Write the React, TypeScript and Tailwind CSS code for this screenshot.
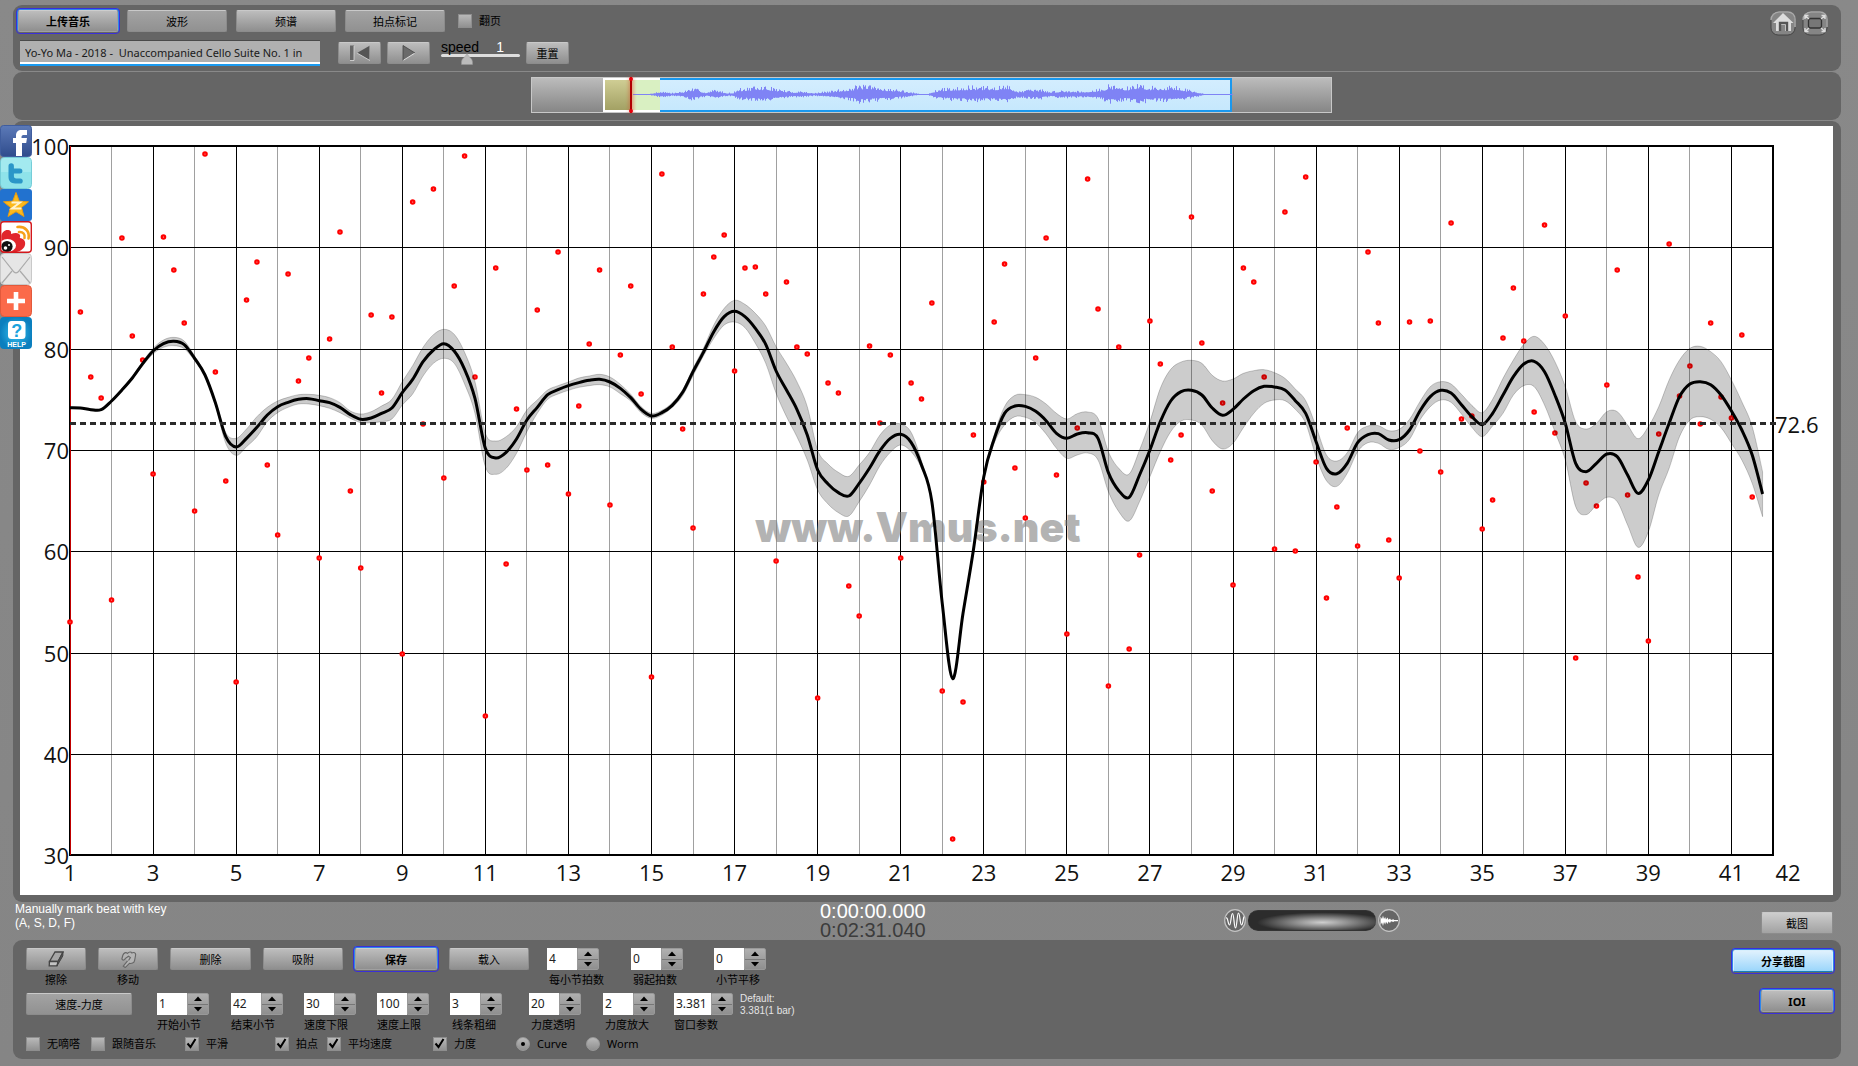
import React from "react";

const UI_FONT = "font-['Noto_Sans','Noto_Sans_CJK_SC',sans-serif]";
const ARIAL = "font-['Liberation_Sans',Arial,sans-serif]";

/* ---------- chart data: one entry per beat, four beats per bar ---------- */

const X0 = 70;
const BEAT = 10.384;
const beatX = (i: number) => X0 + i * BEAT;

const DOTS = [
  622, 312, 377, 398, 600, 238, 336, 360, 474, 237, 270, 323, 511, 154, 372, 481, 682, 300, 262, 465, 535, 274, 381,
  358, 558, 339, 232, 491, 568, 315, 393, 317, 654, 202, 424, 189, 478, 286, 156, 377, 716, 268, 564, 409, 470, 310,
  465, 252, 494, 406, 344, 270, 505, 355, 286, 394, 677, 174, 347, 429, 528, 294, 257, 235, 371, 268, 267, 294, 561,
  282, 347, 354, 698, 383, 393, 586, 616, 346, 423, 355, 558, 383, 399, 303, 691, 839, 702, 435, 482, 322, 264, 468,
  518, 358, 238, 475, 634, 428, 179, 309, 686, 347, 649, 555, 321, 364, 460, 435, 217, 343, 491, 403, 585, 268, 282,
  377, 549, 212, 551, 177, 462, 598, 507, 428, 546, 252, 323, 540, 578, 322, 451, 321, 472, 223, 419, 416, 529, 500,
  338, 288, 341, 412, 225, 433, 316, 658, 483, 506, 385, 270, 495, 577, 641, 434, 244, 396, 366, 424, 323, 397, 418,
  335, 497,
];

/* [tempo curve, upper edge of the band, lower edge of the band] in thirds of a unit */
const CURVE: [number, number, number][] = [
  [1223, 1221, 1225], [1224, 1222, 1226], [1229, 1226, 1231], [1229, 1226, 1231], [1203, 1200, 1206],
  [1170, 1166, 1173], [1134, 1130, 1138], [1091, 1085, 1097], [1053, 1045, 1062], [1031, 1020, 1042],
  [1024, 1012, 1037], [1034, 1023, 1046], [1075, 1068, 1082], [1125, 1120, 1130], [1208, 1203, 1213],
  [1310, 1298, 1330], [1341, 1315, 1366], [1315, 1287, 1340], [1282, 1250, 1310], [1245, 1222, 1265],
  [1220, 1203, 1238], [1207, 1192, 1222], [1198, 1184, 1212], [1196, 1183, 1212], [1202, 1186, 1217],
  [1208, 1193, 1225], [1222, 1208, 1238], [1244, 1233, 1255], [1258, 1242, 1268], [1254, 1235, 1268],
  [1240, 1218, 1265], [1224, 1198, 1257], [1178, 1145, 1215], [1138, 1097, 1182], [1085, 1042, 1128],
  [1050, 1004, 1090], [1031, 988, 1075], [1053, 1003, 1090], [1108, 1057, 1152], [1195, 1145, 1240],
  [1345, 1300, 1400], [1374, 1323, 1423], [1357, 1310, 1405], [1317, 1280, 1360], [1260, 1230, 1295],
  [1222, 1200, 1240], [1184, 1170, 1198], [1169, 1157, 1182], [1157, 1146, 1171], [1148, 1134, 1162],
  [1141, 1128, 1157], [1138, 1123, 1154], [1146, 1131, 1161], [1165, 1153, 1181], [1193, 1183, 1203],
  [1228, 1220, 1238], [1248, 1240, 1255], [1238, 1231, 1245], [1216, 1208, 1222], [1177, 1169, 1187],
  [1115, 1105, 1127], [1057, 1045, 1068], [995, 975, 1015], [950, 925, 975], [934, 901, 966],
  [950, 913, 983], [985, 940, 1030], [1033, 978, 1090], [1113, 1040, 1180], [1170, 1090, 1250],
  [1228, 1145, 1310], [1305, 1220, 1380], [1410, 1350, 1470], [1452, 1392, 1512], [1478, 1417, 1538],
  [1488, 1429, 1548], [1450, 1395, 1505], [1404, 1357, 1455], [1352, 1305, 1397], [1315, 1275, 1357],
  [1303, 1272, 1335], [1327, 1297, 1355], [1395, 1383, 1405], [1505, 1503, 1507], [1810, 1808, 1812],
  [2036, 2034, 2038], [1840, 1838, 1842], [1650, 1648, 1652], [1430, 1426, 1434], [1317, 1305, 1330],
  [1240, 1220, 1275], [1218, 1186, 1250], [1219, 1184, 1252], [1234, 1192, 1268], [1262, 1212, 1302],
  [1300, 1240, 1345], [1315, 1257, 1375], [1302, 1241, 1365], [1298, 1236, 1359], [1315, 1255, 1380],
  [1418, 1355, 1475], [1472, 1405, 1535], [1492, 1422, 1563], [1425, 1350, 1505], [1350, 1265, 1430],
  [1265, 1165, 1355], [1203, 1108, 1295], [1175, 1086, 1263], [1171, 1081, 1260], [1185, 1090, 1275],
  [1224, 1126, 1322], [1246, 1143, 1347], [1228, 1137, 1330], [1197, 1120, 1283], [1172, 1112, 1240],
  [1159, 1109, 1210], [1161, 1118, 1200], [1170, 1135, 1202], [1202, 1167, 1228], [1240, 1202, 1270],
  [1325, 1280, 1370], [1405, 1365, 1442], [1421, 1383, 1459], [1390, 1358, 1420], [1328, 1298, 1355],
  [1304, 1278, 1328], [1301, 1277, 1330], [1320, 1292, 1348], [1319, 1288, 1343], [1290, 1258, 1318],
  [1233, 1205, 1260], [1190, 1160, 1220], [1171, 1145, 1200], [1179, 1152, 1207], [1214, 1183, 1242],
  [1250, 1216, 1282], [1274, 1238, 1310], [1240, 1198, 1278], [1185, 1135, 1240], [1130, 1080, 1185],
  [1092, 1033, 1157], [1084, 1009, 1160], [1115, 1033, 1215], [1185, 1085, 1295], [1270, 1160, 1380],
  [1390, 1265, 1520], [1415, 1287, 1544], [1390, 1270, 1515], [1362, 1235, 1492], [1370, 1235, 1505],
  [1425, 1275, 1575], [1480, 1316, 1642], [1440, 1280, 1595], [1355, 1220, 1485], [1270, 1140, 1405],
  [1190, 1080, 1310], [1152, 1045, 1260], [1145, 1039, 1250], [1154, 1055, 1258], [1185, 1085, 1283],
  [1233, 1140, 1330], [1290, 1205, 1380], [1365, 1280, 1450], [1482, 1415, 1550],
];

type Pt = [number, number];

function spline(p: Pt[]): string {
  let d = "";
  for (let i = 0; i < p.length - 1; i++) {
    const a = p[Math.max(0, i - 1)];
    const b = p[i];
    const c = p[i + 1];
    const e = p[Math.min(p.length - 1, i + 2)];
    d += `C${b[0] + (c[0] - a[0]) / 6},${b[1] + (c[1] - a[1]) / 6} ${c[0] - (e[0] - b[0]) / 6},${
      c[1] - (e[1] - b[1]) / 6
    } ${c[0]},${c[1]}`;
  }
  return d;
}

const line = (k: number): Pt[] => CURVE.map((c, i) => [beatX(i), c[k] / 3]);
const mid = line(0);
const upper = line(1);
const lower = line(2).reverse();
const MID_PATH = `M${mid[0]}${spline(mid)}`;
const BAND_PATH = `M${upper[0]}${spline(upper)}L${lower[0]}${spline(lower)}Z`;

function Chart() {
  const bars = Array.from({ length: 40 }, (_, i) => i + 2);
  const odd = Array.from({ length: 21 }, (_, i) => i * 2 + 1);
  const tempos = [100, 90, 80, 70, 60, 50, 40, 30];
  const ty = (t: number) => 146 + (100 - t) * 10.13;
  return (
    <svg
      viewBox="20 126 1813 769"
      className="block h-auto w-full bg-white font-['Open_Sans','Noto_Sans',sans-serif]"
      role="img"
      aria-label="Tempo chart"
    >
      {bars.map((b) => {
        const x = Math.floor(beatX((b - 1) * 4)) + 0.5;
        return (
          <line key={b} x1={x} x2={x} y1={146} y2={854} stroke={b % 2 ? "#000" : "#a0a0a0"} strokeWidth={1} />
        );
      })}
      {tempos.slice(1, -1).map((t) => {
        const y = Math.round(ty(t)) + 0.5;
        return <line key={t} x1={70} x2={1773} y1={y} y2={y} stroke="#000" />;
      })}
      <rect x={70} y={146} width={1703} height={709} fill="none" stroke="#000" strokeWidth={2} />
      <line x1={70.5} x2={70.5} y1={146} y2={855} stroke="#c00000" strokeWidth={1} />
      {DOTS.map((y, i) => (
        <g key={i}>
          <circle cx={beatX(i)} cy={y} r={2.8} fill="#f00" />
          <circle cx={beatX(i)} cy={y} r={0.6} fill="#fbb" />
        </g>
      ))}
      <text
        x={918}
        y={542}
        textAnchor="middle"
        fontSize={41}
        className="font-['Inter',sans-serif] font-black"
        fill="#808080"
        fillOpacity={0.6}
      >
        www.Vmus.net
      </text>
      <path d={BAND_PATH} fill="#000" fillOpacity={0.2} stroke="#000" strokeOpacity={0.2} />
      <path d={MID_PATH} fill="none" stroke="#000" strokeWidth={3} strokeLinejoin="round" />
      <line x1={70} x2={1777} y1={423.5} y2={423.5} stroke="#2a2a2a" strokeWidth={3} strokeDasharray="6 4" />
      <g fontSize={22} fill="#111">
        {tempos.map((t) => (
          <text key={t} x={69} y={ty(t) + 9} textAnchor="end">
            {t}
          </text>
        ))}
        {odd.map((b) => (
          <text key={b} x={beatX((b - 1) * 4)} y={881} textAnchor="middle">
            {b}
          </text>
        ))}
        <text x={1788} y={881} textAnchor="middle">
          42
        </text>
        <text x={1775} y={433}>
          72.6
        </text>
      </g>
    </svg>
  );
}

/* ---------- overview strip ---------- */

const ENVELOPE: Pt[] = [
  [0, 0.3], [16, 0.6], [22, 2], [29, 3.3], [38, 1.5], [50, 3], [57, 6], [64, 5], [73, 2], [82, 5], [93, 1.6],
  [100, 2], [104, 5.5], [115, 6.5], [131, 8], [142, 6], [159, 2.6], [167, 3.4], [181, 1.5], [197, 3.4], [219, 7],
  [227, 9.5], [246, 7], [263, 5], [279, 2], [287, 0.4], [294, 0.4], [299, 3], [307, 5.4], [323, 7.4], [340, 8],
  [356, 7.4], [376, 8.5], [384, 3.4], [406, 5.4], [417, 2.8], [428, 4], [450, 3.4], [468, 5.4], [476, 9.5],
  [493, 6.8], [507, 10.8], [515, 7.5], [543, 8], [559, 3.6], [570, 1.2], [573, 0.4], [600, 0.4],
];

/* small deterministic generator, so the strip looks the same on every load */
function noise(seed: number) {
  let s = seed;
  return () => {
    s = (s * 1664525 + 1013904223) % 4294967296;
    return s / 4294967296;
  };
}

function wavePath(): string {
  const rand = noise(7);
  let d = "";
  let k = 0;
  for (let x = 0; x < 600; x++) {
    while (ENVELOPE[k + 1][0] < x) k++;
    const [xa, a] = ENVELOPE[k];
    const [xb, b] = ENVELOPE[k + 1];
    const env = a + ((b - a) * (x - xa)) / (xb - xa);
    const r1 = rand();
    const r2 = rand();
    const up = Math.max(0.5, env * (0.55 + 0.6 * r1 * r1));
    const dn = Math.max(0.5, env * (0.5 + 0.5 * r2 * r2));
    d += `M${x + 0.5} ${14.5 - up}V${14.5 + dn}`;
  }
  return d;
}
const WAVE = wavePath();

function Overview() {
  return (
    <div className="mx-auto flex h-9 w-[801px] border border-[#c8c8c8] bg-linear-to-b from-[#bcbcbc] to-[#868686] pl-[71px]">
      <div className="relative flex h-[34px] w-[629px] border-2 border-[#1a98ee] bg-linear-to-b from-[#d3edfe] to-[#c6e8fd]">
        <div className="absolute -top-0.5 -left-0.5 flex h-[34px] w-[57px] border-2 border-r-0 border-white">
          <div className="w-[26px] bg-linear-to-b from-[#cfcd94] to-[#a3a164]" />
          <div className="flex-1 bg-linear-to-r from-[#e9d5b0] to-[#d9f0c2] to-20%" />
        </div>
        <svg viewBox="0 0 600 31" className="absolute top-0 left-7 h-[31px] w-[600px]" aria-hidden="true">
          <path d={WAVE} stroke="#7f83f5" strokeWidth={1} fill="none" />
        </svg>
        <div className="absolute -top-[3px] left-[25px] h-9 w-0.5 bg-[#b00000] shadow-[0_0_4px_#d05030]" />
        <div className="absolute -top-[3px] left-6 h-1 w-1 rounded-full bg-red-600" />
        <div className="absolute -bottom-[3px] left-6 h-1 w-1 rounded-full bg-red-600" />
      </div>
    </div>
  );
}

/* ---------- controls ---------- */

const BTN =
  "flex h-[22px] items-center justify-center rounded-xs border text-[11px] leading-none text-black";
const EDGE = "border-[#8c8c8c] border-t-[#c9c9c9]";
const LIGHT = "bg-linear-to-b from-[#bdbdbd] to-[#8f8f8f]";
const FLAT = "bg-linear-to-b from-[#a3a3a3] to-[#919191]";
const FOCUS =
  "outline-1 outline-offset-1 outline-[#3a2fd8] border-[#a0a0a0] border-t-[#cdcdcd] font-bold shadow-[0_-1px_0_1px_#2d86ec]";

function Btn({ className = EDGE, children, label }: { className?: string; children: React.ReactNode; label?: string }) {
  return (
    <button type="button" aria-label={label} className={`${BTN} ${className}`}>
      {children}
    </button>
  );
}

function Check({ label, checked, className = "" }: { label: string; checked?: boolean; className?: string }) {
  return (
    <label className={`flex items-center gap-[7px] ${className}`}>
      <span className="relative flex">
        <input
          type="checkbox"
          defaultChecked={checked}
          className="peer h-3.5 w-3.5 appearance-none border border-[#8e8e8e] bg-linear-to-b from-[#b9b9b9] to-[#919191]"
        />
        <svg
          viewBox="0 0 14 14"
          className="pointer-events-none absolute inset-0 hidden h-3.5 w-3.5 peer-checked:block"
          aria-hidden="true"
        >
          <path d="M2.5 6.5 5.5 10 10.5 2" fill="none" stroke="#000" strokeWidth={2} />
        </svg>
      </span>
      <span>{label}</span>
    </label>
  );
}

function Radio({ label, checked, className = "" }: { label: string; checked?: boolean; className?: string }) {
  return (
    <label className={`flex items-center gap-[7px] ${className}`}>
      <span className="relative flex">
        <input
          type="radio"
          name="view"
          defaultChecked={checked}
          className="peer h-3.5 w-3.5 appearance-none rounded-full border border-[#999] bg-linear-to-b from-[#b9b9b9] to-[#8f8f8f]"
        />
        <span className="pointer-events-none absolute top-[5px] left-[5px] hidden h-1 w-1 rounded-full bg-black peer-checked:block" />
      </span>
      <span>{label}</span>
    </label>
  );
}

function Spinner({
  label,
  value,
  className = "w-[73px]",
  inputClass = "w-[30px]",
  labelClass = "",
}: {
  label: string;
  value: string;
  className?: string;
  inputClass?: string;
  labelClass?: string;
}) {
  const id = `f-${label}`;
  return (
    <div className={`flex shrink-0 flex-col gap-px ${className}`}>
      <div className="flex h-[22px]">
        <input
          id={id}
          type="text"
          defaultValue={value}
          className={`h-[22px] bg-white pb-0.5 pl-0.5 text-[12px] leading-none text-[#222] ${inputClass}`}
        />
        <div className="flex w-[22px] flex-col rounded-r-xs border border-[#999] bg-linear-to-b from-[#b0b0b0] to-[#8f8f8f]">
          <button
            type="button"
            aria-label={`${label} +`}
            className="flex flex-1 items-center justify-center border-b border-[#777]"
          >
            <svg viewBox="0 0 8 5" className="h-[5px] w-2">
              <path d="M0 5 4 0.5 8 5Z" />
            </svg>
          </button>
          <button type="button" aria-label={`${label} -`} className="flex flex-1 items-center justify-center">
            <svg viewBox="0 0 8 5" className="h-[5px] w-2">
              <path d="M0 0H8L4 4.5Z" />
            </svg>
          </button>
        </div>
      </div>
      <label htmlFor={id} className={`whitespace-nowrap leading-[18px] ${labelClass}`}>
        {label}
      </label>
    </div>
  );
}

function ToolButton({ label, children }: { label: string; children: React.ReactNode }) {
  return (
    <div className="flex w-[60px] flex-col items-center gap-px">
      <Btn label={label} className={`w-[60px] ${EDGE} ${LIGHT}`}>
        {children}
      </Btn>
      <span className="leading-[18px]">{label}</span>
    </div>
  );
}

/* ---------- share icons ---------- */

function ShareBar() {
  return (
    <nav aria-label="Share" className="absolute top-[125px] left-0 flex w-8 flex-col">
      <a href="#facebook" aria-label="Facebook">
        <svg viewBox="0 0 32 32" className="h-8 w-8">
          <defs>
            <linearGradient id="fb" x1="0" y1="0" x2="0" y2="1">
              <stop offset="0" stopColor="#5c7ab8" />
              <stop offset="1" stopColor="#2f4c8c" />
            </linearGradient>
          </defs>
          <rect x="0.5" y="0.5" width="31" height="31" rx="3" fill="url(#fb)" stroke="#3f5d9e" />
          <path
            d="M16 31V18h-3v-5h3v-2.500c0-3.500 2-5.500 5.500-5.500H27v5h-3c-1.500 0-2.500.5-2.500 2V13H27l-.8 5h-4.200v13Z"
            fill="#fff"
          />
        </svg>
      </a>
      <a href="#twitter" aria-label="Twitter">
        <svg viewBox="0 0 32 32" className="h-8 w-8">
          <rect x="0.5" y="0.5" width="31" height="31" rx="4" fill="#8fe3ea" stroke="#75cdd8" />
          <path d="M1 4a3 3 0 0 1 3-3h24a3 3 0 0 1 3 3v11H1Z" fill="#b0eef2" opacity=".6" />
          <path
            d="M8.500 9a2.700 2.700 0 0 1 5.400 0v2.500h6a2.300 2.300 0 0 1 0 5h-6V19c0 1.800.8 2.400 2.300 2.400h4a2.500 2.500 0 0 1 0 5.100h-5c-4.300 0-6.700-2.300-6.700-6.700Z"
            fill="#2b96c8"
          />
        </svg>
      </a>
      <a href="#qzone" aria-label="Qzone">
        <svg viewBox="0 0 32 32" className="h-8 w-8">
          <rect width="32" height="32" rx="3" fill="#2272cf" />
          <path
            d="M16 3.500 19.300 12.200 28.500 12.800 21.500 18.400 24 27.500 16 22.700 8 27.500 10.500 18.400 3.500 12.800 12.700 12.200Z"
            fill="#fbb91c"
            stroke="#e79b12"
          />
          <path d="M11.500 13.500H20L12 19.500H21.500" fill="none" stroke="#fff3cf" strokeWidth="2" />
        </svg>
      </a>
      <a href="#weibo" aria-label="Weibo">
        <svg viewBox="0 0 32 32" className="h-8 w-8">
          <rect x="0.700" y="0.700" width="30.600" height="30.600" rx="3" fill="#fff" />
          <path
            d="M1.400 15c.5-4 3.500-6.500 7-6 2.500.300 2.900 2 2.700 4 4-1.800 8.500-1.500 9 1.500.2 1.300-.3 2-.3 2.500 3.500.6 6 2.600 5.300 6.500-.7 4-4 6.300-8.500 7.600H1.400Z"
            fill="#e1262c"
          />
          <ellipse cx="7.500" cy="24.500" rx="8.500" ry="6.500" fill="#fff" />
          <circle cx="7" cy="25.500" r="5.600" fill="#111" />
          <circle cx="5.500" cy="27" r="1.800" fill="#fff" />
          <circle cx="9" cy="24" r="1" fill="#fff" />
          <path
            d="M19 11c4-.500 6.500 2.500 5.500 6M17.500 6c7.500-1 12.500 4.500 11 11.500"
            fill="none"
            stroke="#f6a11b"
            strokeWidth="2.600"
            strokeLinecap="round"
          />
          <rect x="0.700" y="0.700" width="30.600" height="30.600" rx="3" fill="none" stroke="#d3181c" strokeWidth="1.400" />
        </svg>
      </a>
      <a href="#mail" aria-label="Mail">
        <svg viewBox="0 0 32 32" className="h-8 w-8">
          <rect x="0.500" y="0.500" width="31" height="31" rx="4" fill="#e6e6e6" stroke="#c9c9c9" />
          <path d="M2 4 14 19a3 3 0 0 0 4 0L30 4M2 30 12 18M30 30 20 18" fill="none" stroke="#aaa" strokeWidth="1.200" />
        </svg>
      </a>
      <a href="#more" aria-label="More">
        <svg viewBox="0 0 32 32" className="h-8 w-8">
          <rect x="0.500" y="0.500" width="31" height="31" rx="4" fill="#fb6a4a" stroke="#e2593b" />
          <path d="M16 7v18M7 16h18" stroke="#fff" strokeWidth="4.600" />
        </svg>
      </a>
      <a href="#help" aria-label="Help">
        <svg viewBox="0 0 32 32" className="h-8 w-8">
          <defs>
            <radialGradient id="hp">
              <stop offset="0" stopColor="#35c3f3" />
              <stop offset="1" stopColor="#0b7fbe" />
            </radialGradient>
          </defs>
          <rect width="32" height="32" rx="4" fill="url(#hp)" />
          <rect x="8" y="4" width="17.500" height="18" rx="3.500" fill="#fff" />
          <text x="16.700" y="19.500" textAnchor="middle" fontSize="18" className={`font-bold ${ARIAL}`} fill="#1aa3dd">
            ?
          </text>
          <text x="16.500" y="29.500" textAnchor="middle" fontSize="7" className={`font-bold ${ARIAL}`} fill="#fff">
            HELP
          </text>
        </svg>
      </a>
    </nav>
  );
}

const PANEL = "rounded-[9px] bg-[#656565]";

export default function App() {
  return (
    <div
      className={`relative flex min-h-screen flex-col bg-linear-to-b from-[#898989] to-[#858585] pt-[5px] pr-[17px] pb-[7px] pl-[13px] text-[11px] text-black ${UI_FONT}`}
    >
      {/* toolbar */}
      <header className={`${PANEL} flex h-[66px] items-start justify-between pr-[13px] pl-[5px]`}>
        <div className="pt-[5px]">
          <div className="flex items-center gap-[9px]">
            <Btn className={`w-[100px] ${LIGHT} ${FOCUS}`}>上传音乐</Btn>
            <Btn className={`w-[100px] ${EDGE} ${FLAT}`}>波形</Btn>
            <Btn className={`w-[100px] ${EDGE} ${LIGHT}`}>频谱</Btn>
            <Btn className={`w-[100px] ${EDGE} ${FLAT}`}>拍点标记</Btn>
            <Check label="翻页" className="ml-1" />
          </div>
          <div className="mt-2 flex items-start">
            <input
              type="text"
              aria-label="Track"
              readOnly
              value="Yo-Yo Ma - 2018 -  Unaccompanied Cello Suite No. 1 in"
              className="ml-0.5 h-[26px] w-[300px] border-t border-b-2 border-t-[#4a4a4a] border-b-[#1c9bf0] bg-[#b0b0b0] pl-[5px] text-[11px] text-[#1a1a1a] shadow-[inset_0_-2px_0_#fff]"
            />
            <div className="mt-0.5 ml-[18px] flex gap-1.5">
              <Btn label="Rewind" className={`w-[43px] ${EDGE} ${LIGHT}`}>
                <svg viewBox="0 0 20 16" className="h-4 w-5">
                  <path d="M0 0.500H4V15.500H0Z" fill="#666" />
                  <path d="M20 0.500V15.500L7 8Z" fill="#555" />
                  <path d="M4 1V15.500H0M20 0.500V15.500L7 8" fill="none" stroke="#ddd" strokeWidth="0.800" />
                </svg>
              </Btn>
              <Btn label="Play" className={`w-[43px] ${EDGE} ${LIGHT}`}>
                <svg viewBox="0 0 14 16" className="h-4 w-3.5">
                  <path d="M1 0.500V15.500L13 8Z" fill="#6a6a6a" />
                  <path d="M13 8 1 15.500" stroke="#ddd" />
                  <path d="M1 15.500V0.500L13 8" fill="none" stroke="#444" strokeWidth="0.800" />
                </svg>
              </Btn>
            </div>
            <div className={`relative ml-[11px] w-[79px] text-[14px] leading-none ${ARIAL}`}>
              <div className="flex justify-between pr-4">
                <label htmlFor="speed">speed</label>
                <output className="text-white">1</output>
              </div>
              <input
                id="speed"
                type="range"
                min={0}
                max={3}
                step={0.01}
                defaultValue={1}
                className="absolute top-2 left-0 h-4 w-full opacity-0"
              />
              <div className="pointer-events-none h-[3px] w-full rounded-full bg-[#dedede]" />
              <svg viewBox="0 0 12 12" className="pointer-events-none -mt-1 ml-5 h-3 w-3" aria-hidden="true">
                <path
                  d="M6 0.500C7 4 11.500 5 11.500 9V11.500H0.500V9C0.500 5 5 4 6 0.500Z"
                  fill="#bbb"
                  stroke="#999"
                  strokeWidth="0.500"
                />
              </svg>
            </div>
            <Btn className={`mt-0.5 ml-1.5 w-[43px] ${EDGE} ${LIGHT}`}>重置</Btn>
          </div>
        </div>
        <div className="flex gap-1.5 pt-1.5">
          <button type="button" aria-label="Home">
            <svg viewBox="0 0 26 25" className="h-[25px] w-[26px]">
              <rect x="1" y="1" width="24" height="23" rx="7" fill="#858585" stroke="#444" />
              <path d="M1 9a8 8 0 0 1 8-8h9a7 7 0 0 1 7 7v8" fill="none" stroke="#aaa" strokeWidth="1.500" />
              <path d="M13 2 3 12h3v8h5v-6h4v6h6v-8h2.500Z" fill="#dcdcdc" />
              <path d="M10 20v-8h7v8" fill="none" stroke="#555" strokeWidth="2.400" />
            </svg>
          </button>
          <button type="button" aria-label="Full screen">
            <svg viewBox="0 0 26 25" className="h-[25px] w-[26px]">
              <rect x="1" y="1" width="24" height="23" rx="7" fill="#858585" stroke="#444" />
              <path d="M1 9a8 8 0 0 1 8-8h9a7 7 0 0 1 7 7v8" fill="none" stroke="#aaa" strokeWidth="1.500" />
              <rect x="6.500" y="7.500" width="13" height="9.500" rx="2" fill="#777" stroke="#333" strokeWidth="1.300" />
              <path
                d="M3 8V4.500H6.500M3 4.500 7 8M19.500 4.500H23V8M23 4.500 19 8M3 17V20.500H6.500M3 20.500 7 17M23 17V20.500H19.500M23 20.500 19 17"
                fill="none"
                stroke="#ddd"
                strokeWidth="1.400"
              />
            </svg>
          </button>
        </div>
      </header>

      {/* overview */}
      <section className={`${PANEL} mt-px h-12 pt-[5px] pl-[9px]`}>
        <Overview />
      </section>

      {/* chart */}
      <main className={`${PANEL} mt-px pt-[5px] pr-2 pb-[7px] pl-[7px]`}>
        <Chart />
      </main>

      {/* status strip */}
      <section className={`grid h-[38px] grid-cols-[807fr_404fr_617fr] ${ARIAL}`}>
        <p className="w-[170px] pl-0.5 text-[12px] leading-[14px] text-white">
          Manually mark beat with key
          <br />
          (A, S, D, F)
        </p>
        <div className="text-[20px] leading-[19px]">
          <div className="text-white">0:00:00.000</div>
          <div className="text-[#3c3c3c]">0:02:31.040</div>
        </div>
        <div className="flex justify-between pr-2">
          <div className="flex items-center gap-0.5 pb-px">
            <svg viewBox="0 0 22 23" className="h-[23px] w-[22px]" aria-hidden="true">
              <ellipse cx="11" cy="11.500" rx="10.300" ry="10.800" fill="#666" stroke="#c4c4c4" strokeWidth="1.200" />
              <path
                d="M2 9c2-1 2 7 3.500 7S7 4.500 8.500 4.500 10 19 11.500 19 13 4 14.500 4 16 16 17.500 16 19 10 20 7.500"
                fill="none"
                stroke="#fff"
                strokeWidth="1.200"
              />
            </svg>
            <div className="h-[21px] w-[128px] rounded-[10px] border-y border-[#333] bg-[radial-gradient(ellipse_at_58%_60%,#cfcfcf_0%,#8f8f8f_25%,#2c2c2c_62%)]" />
            <svg viewBox="0 0 22 23" className="h-[23px] w-[22px]" aria-hidden="true">
              <ellipse cx="11" cy="11.500" rx="10.300" ry="10.800" fill="#666" stroke="#c4c4c4" strokeWidth="1.200" />
              <path
                d="M2.500 7.500 4 10 5 6.500 6 10 7.200 8 8 10.500 9.500 8.500 10.500 10.800 12 9.500 13 11 15.500 10.300 16 11 20 11V12.200L16 12.300 15.500 13 13 12.300 12 14 10.500 12.500 9.500 15 8 12.800 7.200 15.500 6 13 5 17 4 13.500 2.500 16Z"
                fill="#fff"
              />
            </svg>
          </div>
          <Btn
            className={`mt-2.5 w-[72px] ${EDGE} bg-linear-to-b from-[#cdcdcd] to-[#a2a2a2] font-['Noto_Sans','Noto_Sans_CJK_SC',sans-serif]`}
          >
            截图
          </Btn>
        </div>
      </section>

      {/* settings */}
      <footer className={`${PANEL} flex h-[119px] items-start justify-between pt-2 pr-2 pl-[13px]`}>
        <div className="flex flex-col">
          <div className="flex items-start gap-3">
            <ToolButton label="擦除">
              <svg viewBox="0 0 18 16" className="h-4 w-[18px]">
                <path d="M8 1H16L11 10.500H2.500Z" fill="#a6a6a6" stroke="#444" strokeWidth="1.300" />
                <path d="M2.500 10.500H11L10 14.800H2.200Z" fill="#c4c4c4" stroke="#444" strokeWidth="1.300" />
                <path d="M16 1 15.800 5 10 14.800 11 10.500Z" fill="#555" stroke="#444" strokeWidth="1" />
              </svg>
            </ToolButton>
            <ToolButton label="移动">
              <svg viewBox="0 0 18 18" className="h-[17px] w-[17px]">
                <path
                  d="M3 4.500C4 2 6 1 8 2.500 9.500 .5 12 .8 12.500 2 14.500 1 17 2 16.500 4.500L15.500 10C15 13 12 13.500 10 13L5.500 17.500 3.500 16 8 10.500M3 4.500 2 8.500C3 10.500 5 9.500 5.500 8L9 5.500 11 7 9 10"
                  fill="#b4b4b4"
                  stroke="#666"
                  strokeWidth="1.200"
                />
              </svg>
            </ToolButton>
            <Btn className={`w-[81px] ${EDGE} ${LIGHT}`}>删除</Btn>
            <Btn className={`w-20 ${EDGE} ${LIGHT}`}>吸附</Btn>
            <Btn className={`w-[82px] ${LIGHT} ${FOCUS}`}>保存</Btn>
            <Btn className={`mr-1.5 w-20 ${EDGE} ${LIGHT}`}>载入</Btn>
            <Spinner label="每小节拍数" value="4" className="w-[72px]" labelClass="pl-0.5" />
            <Spinner label="弱起拍数" value="0" className="w-[71px]" labelClass="pl-0.5" />
            <Spinner label="小节平移" value="0" className="w-[72px]" labelClass="pl-0.5" />
          </div>
          <div className="mt-1 flex items-start">
            <Btn className={`mr-[25px] w-[106px] ${EDGE} ${FLAT}`}>速度-力度</Btn>
            <Spinner label="开始小节" value="1" className="w-[74px]" />
            <Spinner label="结束小节" value="42" />
            <Spinner label="速度下限" value="30" />
            <Spinner label="速度上限" value="100" />
            <Spinner label="线条粗细" value="3" className="w-[79px]" labelClass="pl-0.5" />
            <Spinner label="力度透明" value="20" className="w-[74px]" labelClass="pl-0.5" />
            <Spinner label="力度放大" value="2" className="w-[71px]" labelClass="pl-0.5" />
            <Spinner label="窗口参数" value="3.381" className="w-[66px]" inputClass="w-[37px]" />
            <p className={`text-[10px] leading-3 text-[#e4e4e4] ${ARIAL}`}>
              Default:
              <br />
              3.381(1 bar)
            </p>
          </div>
          <div className="mt-0.5 flex h-4 items-center">
            <Check label="无嘀嗒" className="w-[65px]" />
            <Check label="跟随音乐" className="w-[94px]" />
            <Check label="平滑" checked className="w-[90px]" />
            <Check label="拍点" checked className="w-[52px]" />
            <Check label="平均速度" checked className="w-[106px]" />
            <Check label="力度" checked className="w-[83px]" />
            <Radio label="Curve" checked className="w-[70px]" />
            <Radio label="Worm" />
          </div>
        </div>
        <div className="flex flex-col items-end gap-[18px] pt-0.5">
          <Btn className="w-[100px] border-[#d8effd] border-b-[#1580b8] bg-linear-to-b from-[#dff1fd] to-[#9bd6fb] font-bold shadow-[0_-1px_0_1px_#2d86ec] outline-1 outline-offset-1 outline-[#3a2fd8]">
            分享截图
          </Btn>
          <Btn className={`w-[72px] ${LIGHT} ${FOCUS}`}>IOI</Btn>
        </div>
      </footer>

      <ShareBar />
    </div>
  );
}
